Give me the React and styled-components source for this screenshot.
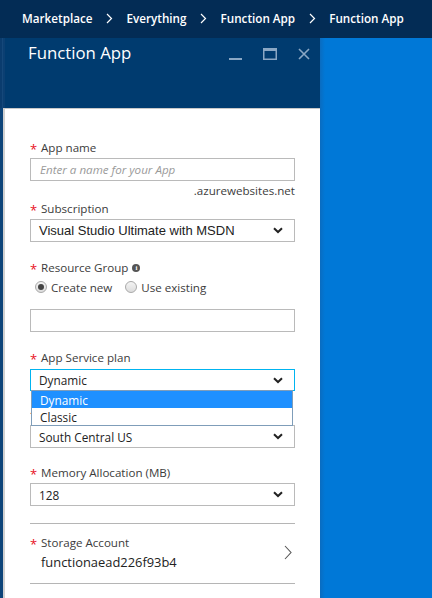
import React from 'react';
import styled, { createGlobalStyle } from 'styled-components';

const GlobalStyle = createGlobalStyle`
  html, body {
    margin: 0;
    padding: 0;
    width: 432px;
    height: 598px;
    overflow: hidden;
    font-family: 'Segoe UI', 'Open Sans', sans-serif;
  }
  * { box-sizing: border-box; }
`;

const Page = styled.div`
  width: 432px;
  height: 598px;
  display: flex;
  flex-direction: column;
  background: #0078d7;
`;

const TopBar = styled.div`
  height: 38px;
  flex: none;
  background: #032c55;
  display: flex;
  align-items: center;
  padding: 0 0 2px 22px;
`;

const Crumb = styled.span`
  color: #ffffff;
  font-size: 11.7px;
  font-weight: 600;
  white-space: nowrap;
`;

const CrumbSep = styled.span`
  display: flex;
  align-items: center;
  justify-content: center;
  width: 34px;
  color: #ffffff;
`;

const Main = styled.div`
  flex: 1;
  display: flex;
  min-height: 0;
`;

const EdgeStrip = styled.div`
  width: 3px;
  flex: none;
  display: flex;
  flex-direction: column;
`;

const EdgeTop = styled.div`
  height: 70px;
  background: #0a3c6e;
  border-right: 1px solid #15487a;
`;

const EdgeBottom = styled.div`
  flex: 1;
  background: #0d4479;
`;

const Blade = styled.div`
  width: 317px;
  flex: none;
  display: flex;
  flex-direction: column;
`;

const BladeHeader = styled.div`
  height: 70px;
  background: #003b6f;
  border-left: 2px solid #0b3f72;
  display: flex;
  align-items: flex-start;
  padding: 3px 10px 0 23px;
`;

const BladeTitle = styled.h1`
  margin: 0;
  flex: 1;
  color: #ffffff;
  font-size: 16.8px;
  font-weight: 400;
  line-height: 24px;
`;

const WindowControls = styled.div`
  display: flex;
  align-items: center;
  gap: 21px;
  padding-top: 6px;
`;

const BladeBody = styled.div`
  flex: 1;
  background: #ffffff;
  border-left: 2px solid #d0d0d0;
  border-top: 1px solid #c8c8c8;
  padding: 30px 25px 0 25px;
  position: relative;
`;

const Field = styled.div`
  margin-top: ${p => p.$gap ?? 0}px;
  position: relative;
`;

const Label = styled.div`
  display: flex;
  align-items: center;
  height: 17px;
  font-size: 11.6px;
  color: #3c3c3c;
  margin-bottom: ${p => p.$mb ?? 2}px;
`;

const Star = styled.span`
  color: #e81123;
  width: 11px;
  font-size: 13px;
  line-height: 1;
  padding-top: 3px;
`;

const TextBox = styled.div`
  height: 23px;
  border: 1px solid #bababa;
  display: flex;
  align-items: center;
  padding-left: 9px;
  font-size: 11.6px;
  color: #9a9a9a;
  font-style: italic;
`;

const Hint = styled.div`
  text-align: right;
  font-size: 11.6px;
  line-height: 16px;
  color: #3c3c3c;
  margin-top: 2px;
  margin-bottom: -1px;
`;

const SelectBox = styled.div`
  height: ${p => (p.$focus ? 22 : 23)}px;
  border: 1px solid ${p => (p.$focus ? '#00b4f0' : '#bababa')};
  display: flex;
  align-items: center;
  justify-content: space-between;
  padding: 0 11px 0 8px;
  font-size: ${p => (p.$arial ? 13 : 11.8)}px;
  font-family: ${p => (p.$arial ? "'Liberation Sans', Arial, sans-serif" : 'inherit')};
  color: #222;
`;

const InfoDot = styled.span`
  display: inline-flex;
  align-items: center;
  justify-content: center;
  width: 8px;
  height: 8px;
  border-radius: 50%;
  background: #555;
  color: #fff;
  font-size: 7px;
  font-weight: 700;
  font-family: 'Liberation Serif', serif;
  margin-left: 4px;
  margin-top: 1px;
`;

const RadioRow = styled.div`
  display: flex;
  align-items: center;
  height: 16px;
  padding-left: 5px;
  gap: 13px;
`;

const RadioOption = styled.label`
  display: flex;
  align-items: center;
  gap: 4px;
  font-size: 11.6px;
  color: #3c3c3c;
`;

const RadioCircle = styled.span`
  width: 12px;
  height: 12px;
  border-radius: 50%;
  border: 1px solid #a9a9a9;
  background: linear-gradient(#f4f4f4, #dcdcdc);
  display: flex;
  align-items: center;
  justify-content: center;
  &::after {
    content: '';
    width: 6px;
    height: 6px;
    border-radius: 50%;
    background: ${p => (p.$checked ? '#444' : 'transparent')};
  }
`;

const DropList = styled.div`
  position: absolute;
  left: 1px;
  right: 2px;
  top: 41px;
  border: 1px solid #7f9db9;
  background: #fff;
  z-index: 2;
`;

const DropItem = styled.div`
  height: 17px;
  display: flex;
  align-items: center;
  padding-left: 8px;
  font-size: 11.8px;
  background: ${p => (p.$active ? '#1e90ff' : '#fff')};
  color: ${p => (p.$active ? '#fff' : '#222')};
`;

const Divider = styled.div`
  height: 1px;
  background: #b5b5b5;
  margin-top: ${p => p.$gap}px;
`;

const PickerRow = styled.div`
  display: flex;
  align-items: center;
  justify-content: space-between;
  margin-top: 10px;
  padding-right: 3px;
`;

const PickerValue = styled.div`
  font-size: 12.9px;
  line-height: 18px;
  color: #222;
  padding-left: 11px;
  margin-top: 2px;
`;

const RightPane = styled.div`
  flex: 1;
  background: linear-gradient(90deg, #0a6cc0 0px, #0078d7 5px);
`;

function Chevron() {
  return (
    <svg width="7" height="11" viewBox="0 0 7 11">
      <path d="M1 1 L5.5 5.5 L1 10" stroke="#fff" strokeWidth="1.2" fill="none" />
    </svg>
  );
}

function DropArrow() {
  return (
    <svg width="10" height="7" viewBox="0 0 10 7">
      <path d="M1 1.2 L5 5 L9 1.2" stroke="#222" strokeWidth="2" fill="none" />
    </svg>
  );
}

function Select({ value, focus, arial }) {
  return (
    <SelectBox $focus={focus} $arial={arial}>
      <span>{value}</span>
      <DropArrow />
    </SelectBox>
  );
}

function FieldLabel({ children, info, mb }) {
  return (
    <Label $mb={mb}>
      <Star>*</Star>
      {children}
      {info && <InfoDot>i</InfoDot>}
    </Label>
  );
}

export default function App() {
  const crumbs = ['Marketplace', 'Everything', 'Function App', 'Function App'];
  return (
    <>
      <GlobalStyle />
      <Page>
        <TopBar>
          {crumbs.map((c, i) => (
            <React.Fragment key={i}>
              {i > 0 && <CrumbSep><Chevron /></CrumbSep>}
              <Crumb>{c}</Crumb>
            </React.Fragment>
          ))}
        </TopBar>
        <Main>
          <EdgeStrip>
            <EdgeTop />
            <EdgeBottom />
          </EdgeStrip>
          <Blade>
            <BladeHeader>
              <BladeTitle>Function App</BladeTitle>
              <WindowControls>
                <svg width="13" height="13" viewBox="0 0 13 13">
                  <rect x="0" y="11" width="13" height="2" fill="#8aa7c4" />
                </svg>
                <svg width="14" height="12" viewBox="0 0 14 12">
                  <rect x="0.75" y="0.75" width="12.5" height="10.5" stroke="#8aa7c4" strokeWidth="1.5" fill="none" />
                  <rect x="0" y="0" width="14" height="3" fill="#8aa7c4" />
                </svg>
                <svg width="12" height="12" viewBox="0 0 12 12">
                  <path d="M1 1 L11 11 M11 1 L1 11" stroke="#8aa7c4" strokeWidth="1.6" />
                </svg>
              </WindowControls>
            </BladeHeader>
            <BladeBody>
              <Field>
                <FieldLabel>App name</FieldLabel>
                <TextBox>Enter a name for your App</TextBox>
                <Hint>.azurewebsites.net</Hint>
              </Field>
              <Field $gap={2}>
                <FieldLabel>Subscription</FieldLabel>
                <Select value="Visual Studio Ultimate with MSDN" arial />
              </Field>
              <Field $gap={17}>
                <FieldLabel info mb={3}>Resource Group</FieldLabel>
                <RadioRow>
                  <RadioOption><RadioCircle $checked />Create new</RadioOption>
                  <RadioOption><RadioCircle />Use existing</RadioOption>
                </RadioRow>
                <Field $gap={14}>
                  <TextBox />
                </Field>
              </Field>
              <Field $gap={17}>
                <FieldLabel mb={3}>App Service plan</FieldLabel>
                <Select value="Dynamic" focus />
                <DropList>
                  <DropItem $active>Dynamic</DropItem>
                  <DropItem>Classic</DropItem>
                </DropList>
              </Field>
              <Field $gap={15}>
                {/* Location label sits under the open list; only its asterisk peeks out */}
                <FieldLabel />
                <Select value="South Central US" />
              </Field>
              <Field $gap={16}>
                <FieldLabel>Memory Allocation (MB)</FieldLabel>
                <Select value="128" />
              </Field>
              <Divider $gap={17} />
              <PickerRow>
                <div>
                  <Label $mb={0}><Star>*</Star>Storage Account</Label>
                  <PickerValue>functionaead226f93b4</PickerValue>
                </div>
                <svg width="8" height="15" viewBox="0 0 8 15">
                  <path d="M1 1 L7 7.5 L1 14" stroke="#555" strokeWidth="1.1" fill="none" />
                </svg>
              </PickerRow>
              <Divider $gap={12} />
            </BladeBody>
          </Blade>
          <RightPane />
        </Main>
      </Page>
    </>
  );
}
